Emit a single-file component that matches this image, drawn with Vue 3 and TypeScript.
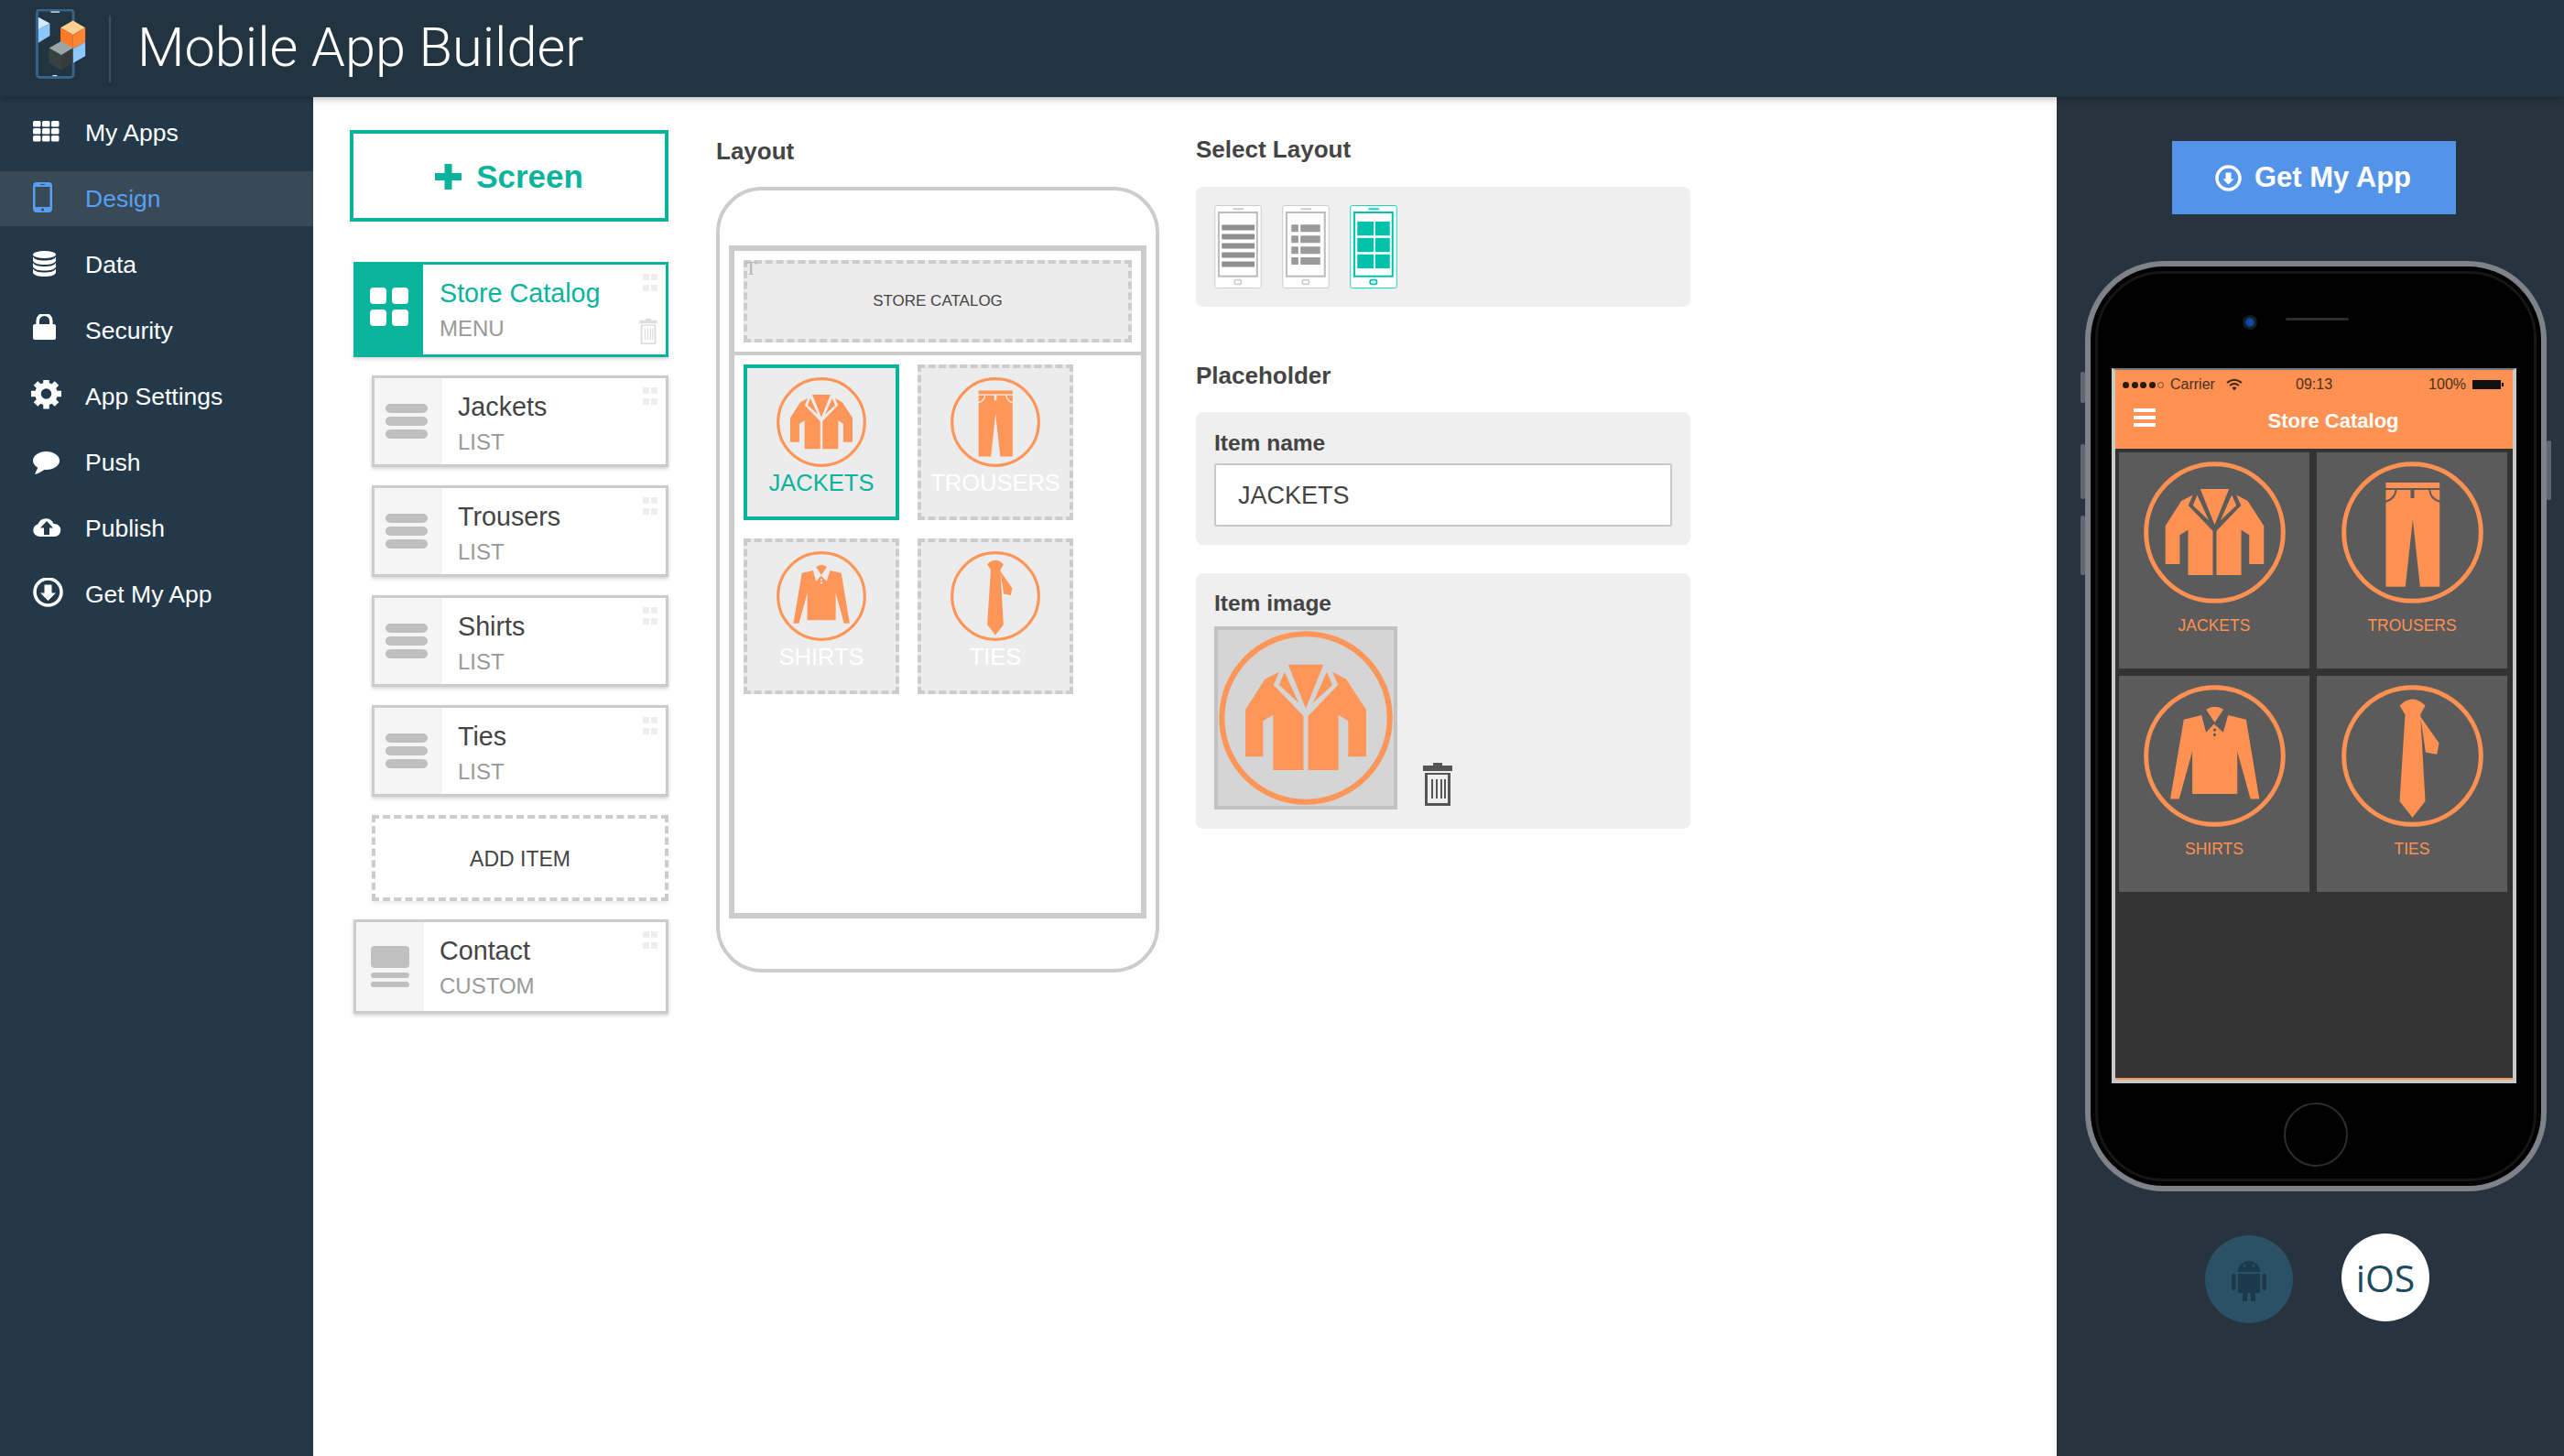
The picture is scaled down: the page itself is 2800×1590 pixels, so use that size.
<script setup lang="ts">
interface NavItem { label: string; icon: string; active?: boolean }
const navItems: NavItem[] = [
  { label: 'My Apps', icon: 'apps' },
  { label: 'Design', icon: 'device', active: true },
  { label: 'Data', icon: 'data' },
  { label: 'Security', icon: 'lock' },
  { label: 'App Settings', icon: 'gear' },
  { label: 'Push', icon: 'chat' },
  { label: 'Publish', icon: 'cloud' },
  { label: 'Get My App', icon: 'download' },
]
const listItems = ['Jackets', 'Trousers', 'Shirts', 'Ties']
interface Tile { label: string; icon: string; selected?: boolean }
const tiles: Tile[] = [
  { label: 'JACKETS', icon: 'jacket', selected: true },
  { label: 'TROUSERS', icon: 'trousers' },
  { label: 'SHIRTS', icon: 'shirt' },
  { label: 'TIES', icon: 'tie' },
]
const layoutRows = [65, 95, 125, 155, 185]
const splitRows = [64, 100, 136, 172]
const gridRows = [54, 108, 162]
</script>

<template>
  <div class="app">
    <svg class="defs" aria-hidden="true">
      <defs>
        <symbol id="jacket" viewBox="0 0 464 464">
          <circle cx="232" cy="232" r="224" fill="none" stroke="currentColor" stroke-width="15" />
          <path fill="currentColor" d="M71 210L123 129 161 109 146 144 226 227V371H145V224L118 240V335H71ZM393 210L340 129 303 109 318 144 238 227V371H319V224L345 240V335H393ZM185 90H279L232 207ZM175 109L161 144 213 192ZM288 109L303 144 251 192Z" />
        </symbol>
        <symbol id="trousers" viewBox="0 0 464 464">
          <circle cx="232" cy="232" r="224" fill="none" stroke="currentColor" stroke-width="15" />
          <path fill="currentColor" d="M145 69H321V87H145ZM145 93H175Q172 120 145 127ZM321 93H291Q294 120 321 127ZM145 134Q178 126 181 93H226V120H238V93H285Q288 126 321 134V409H257L233 190 209 409H145Z" />
        </symbol>
        <symbol id="shirt" viewBox="0 0 464 464">
          <circle cx="232" cy="232" r="224" fill="none" stroke="currentColor" stroke-width="15" />
          <path fill="currentColor" fill-rule="evenodd" d="M131 113L189 99 204 155 230 127 260 155 276 99 335 113 378 373H349L306 217V356H159V217L116 373H87ZM227 147a5 5 0 1 0 10 0a5 5 0 1 0-10 0ZM227 163a5 5 0 1 0 10 0a5 5 0 1 0-10 0Z" />
          <path fill="currentColor" d="M204 80Q232 62 261 80L232 123Z" />
        </symbol>
        <symbol id="tie" viewBox="0 0 464 464">
          <circle cx="232" cy="232" r="224" fill="none" stroke="currentColor" stroke-width="15" />
          <path fill="currentColor" d="M190 67Q232 26 274 67L258 97 274 380 232 433 190 380 208 97ZM258 103L319 190 312 227 275 220Z" />
        </symbol>
        <symbol id="trash" viewBox="0 0 32 47">
          <path fill="currentColor" d="M11 0H21V3H32V9H0V3H11ZM2 11H30V47H2ZM5 13V44H27V13ZM9 18H11V39H9ZM14 18H16V39H14ZM19 18H21V39H19ZM23 18H25V39H23Z" fill-rule="evenodd" />
        </symbol>
        <symbol id="handle" viewBox="0 0 16 19">
          <path fill="currentColor" d="M0 0H7V7H0ZM9 0H16V7H9ZM0 12H7V19H0ZM9 12H16V19H9Z" />
        </symbol>
        <symbol id="apps" viewBox="0 0 36 36">
          <g fill="currentColor">
            <rect x="2" y="5" width="8.5" height="6.5" rx="1.5" /><rect x="12" y="5" width="8.5" height="6.5" rx="1.5" /><rect x="22" y="5" width="8.5" height="6.5" rx="1.5" />
            <rect x="2" y="13" width="8.5" height="6.5" rx="1.5" /><rect x="12" y="13" width="8.5" height="6.5" rx="1.5" /><rect x="22" y="13" width="8.5" height="6.5" rx="1.5" />
            <rect x="2" y="21" width="8.5" height="6.5" rx="1.5" /><rect x="12" y="21" width="8.5" height="6.5" rx="1.5" /><rect x="22" y="21" width="8.5" height="6.5" rx="1.5" />
          </g>
        </symbol>
        <symbol id="device" viewBox="0 0 36 36">
          <path fill="currentColor" fill-rule="evenodd" d="M6 0H19A4 4 0 0 1 23 4V29A4 4 0 0 1 19 33H6A4 4 0 0 1 2 29V4A4 4 0 0 1 6 0ZM4.5 5V27H20.5V5ZM10 2V3H15V2ZM11 30a1.5 1.5 0 1 0 3 0a1.5 1.5 0 1 0-3 0Z" />
        </symbol>
        <symbol id="data" viewBox="0 0 36 36">
          <g fill="currentColor">
            <ellipse cx="14.5" cy="7" rx="12.5" ry="4" />
            <path d="M2 9.5C4 12.5 8 13.5 14.5 13.5S25 12.5 27 9.5V14C25 17 21 18 14.5 18S4 17 2 14Z" />
            <path d="M2 16C4 19 8 20 14.5 20S25 19 27 16V20.5C25 23.5 21 24.5 14.5 24.5S4 23.5 2 20.5Z" />
            <path d="M2 22.5C4 25.5 8 26.5 14.5 26.5S25 25.5 27 22.5V27C25 30 21 31 14.5 31S4 30 2 27Z" />
          </g>
        </symbol>
        <symbol id="lock" viewBox="0 0 36 36">
          <rect x="2" y="11" width="25" height="17" rx="2" fill="currentColor" />
          <path d="M7.2 12V7.500a7.3 7.3 0 0 1 14.600 0V12" fill="none" stroke="currentColor" stroke-width="3.6" />
        </symbol>
        <symbol id="gear" viewBox="0 0 36 36">
          <g stroke="currentColor" stroke-width="6.5">
            <path d="M16.5 -1.500V5" /><path d="M16.5 25V31.500" /><path d="M0 15H6.500" /><path d="M26.500 15H33" />
            <path d="M5 3.500L9.500 8" /><path d="M28 3.500L23.500 8" /><path d="M5 26.500L9.500 22" /><path d="M28 26.500L23.500 22" />
          </g>
          <circle cx="16.5" cy="15" r="9" fill="none" stroke="currentColor" stroke-width="6.5" />
        </symbol>
        <symbol id="chat" viewBox="0 0 36 36">
          <ellipse cx="16.5" cy="16" rx="14.5" ry="10" fill="currentColor" />
          <path d="M8 22L4 31Q11 29 15 25Z" fill="currentColor" />
        </symbol>
        <symbol id="cloud" viewBox="0 0 36 36">
          <path fill="currentColor" fill-rule="evenodd" d="M9 27A7 7 0 0 1 7.600 13.200 9 9 0 0 1 24.500 13 7 7 0 0 1 26 27ZM17 10L10 17.500H14V25H20V17.500H24Z" />
        </symbol>
        <symbol id="download" viewBox="0 0 36 36">
          <circle cx="18.5" cy="15.5" r="14.5" fill="none" stroke="currentColor" stroke-width="3.6" />
          <path fill="currentColor" d="M18.5 25L27 16.500H22.500V7.500H14.500V16.500H10Z" />
        </symbol>
      </defs>
    </svg>

    <header class="topbar">
      <svg class="logo" viewBox="0 0 60 90" aria-hidden="true">
        <rect x="1.500" y="1" width="41" height="76" rx="3" fill="#22343f" stroke="#36648f" stroke-width="3" />
        <rect x="17" y="2.500" width="10" height="1.400" fill="#dfe8ee" />
        <rect x="19" y="74.500" width="5" height="1.200" fill="#dfe8ee" />
        <path fill="#d3eaff" d="M3 9L16 16 3 23Z" />
        <path fill="#8cc8ff" d="M3 23L16 16V30L3 38Z" />
        <path fill="#ffd08f" d="M28 21L42 13 56 21 42 29Z" />
        <path fill="#ff7a28" d="M28 21L42 29V45L28 37Z" />
        <path fill="#ff8434" d="M42 29L56 21V37L42 45Z" />
        <path fill="#8cc8ff" d="M42 45L56 37V53L42 61Z" />
        <path fill="#9aa5a8" d="M15 44L29 36 42 44 29 52Z" />
        <path fill="#3a4142" d="M15 44L29 52V69L15 61Z" />
        <path fill="#343b3c" d="M29 52L42 44V61L29 69Z" />
      </svg>
      <span class="topbar-divider"></span>
      <h1 class="title">Mobile App Builder</h1>
    </header>

    <div class="body">
      <nav class="sidebar">
        <a v-for="item in navItems" :key="item.label" class="nav-item" :class="{ active: item.active }">
          <svg class="nav-icon" aria-hidden="true"><use :href="'#' + item.icon" /></svg>
          <span>{{ item.label }}</span>
        </a>
      </nav>

      <main class="workspace">
        <section class="col-screens">
          <button class="add-screen">
            <svg class="plus" viewBox="0 0 29 28" aria-hidden="true"><path fill="currentColor" d="M10.500 0H18.500V10H29V18H18.500V28H10.500V18H0V10H10.500Z" /></svg>
            <span>Screen</span>
          </button>

          <div class="card card-menu">
            <div class="card-icon menu-icon"><i></i><i></i><i></i><i></i></div>
            <div class="card-text">
              <div class="card-title">Store Catalog</div>
              <div class="card-type">MENU</div>
            </div>
            <svg class="handle" aria-hidden="true"><use href="#handle" /></svg>
            <svg class="card-trash" aria-hidden="true"><use href="#trash" /></svg>
          </div>

          <div v-for="name in listItems" :key="name" class="card card-item">
            <div class="card-icon list-icon"><i></i><i></i><i></i></div>
            <div class="card-text">
              <div class="card-title">{{ name }}</div>
              <div class="card-type">LIST</div>
            </div>
            <svg class="handle" aria-hidden="true"><use href="#handle" /></svg>
          </div>

          <div class="add-item">ADD ITEM</div>

          <div class="card card-custom">
            <div class="card-icon custom-icon"><b></b><i></i><i></i></div>
            <div class="card-text">
              <div class="card-title">Contact</div>
              <div class="card-type">CUSTOM</div>
            </div>
            <svg class="handle" aria-hidden="true"><use href="#handle" /></svg>
          </div>
        </section>

        <section class="col-layout">
          <h2 class="heading">Layout</h2>
          <div class="wire-phone">
            <div class="wire-screen">
              <div class="wire-head">
                <div class="wire-title">
                  <span class="wire-t">T</span>
                  STORE CATALOG
                </div>
              </div>
              <div class="wire-grid">
                <div v-for="tile in tiles" :key="tile.label" class="wire-tile" :class="{ selected: tile.selected }">
                  <svg class="wire-glyph" aria-hidden="true"><use :href="'#' + tile.icon" /></svg>
                  <span>{{ tile.label }}</span>
                </div>
              </div>
            </div>
          </div>
        </section>

        <section class="col-options">
          <h2 class="heading">Select Layout</h2>
          <div class="panel layouts">
            <svg class="layout-thumb" viewBox="0 0 155 274" aria-hidden="true">
              <rect x="1.500" y="1.500" width="152" height="271" rx="6" fill="#fff" stroke="#ccc" stroke-width="3" />
              <rect x="60" y="10" width="36" height="6" rx="3" fill="#ccc" />
              <rect x="14" y="24" width="126" height="210" fill="#fff" stroke="#bbb" stroke-width="6" />
              <rect x="66" y="246" width="22" height="14" rx="5" fill="none" stroke="#ccc" stroke-width="5" />
              <rect v-for="y in layoutRows" :key="y" x="24" :y="y" width="108" height="18" rx="2" fill="#8f8f8f" />
            </svg>
            <svg class="layout-thumb" viewBox="0 0 155 274" aria-hidden="true">
              <rect x="1.500" y="1.500" width="152" height="271" rx="6" fill="#fff" stroke="#ccc" stroke-width="3" />
              <rect x="60" y="10" width="36" height="6" rx="3" fill="#ccc" />
              <rect x="14" y="24" width="126" height="210" fill="#fff" stroke="#bbb" stroke-width="6" />
              <rect x="66" y="246" width="22" height="14" rx="5" fill="none" stroke="#ccc" stroke-width="5" />
              <g v-for="y in splitRows" :key="y" fill="#9a9a9a">
                <rect x="30" :y="y" width="23" height="24" rx="2" />
                <rect x="60" :y="y" width="65" height="24" rx="2" />
              </g>
            </svg>
            <svg class="layout-thumb" viewBox="0 0 155 274" aria-hidden="true">
              <rect x="1.500" y="1.500" width="152" height="271" rx="6" fill="#fff" stroke="#19d3bd" stroke-width="3" />
              <rect x="60" y="10" width="36" height="6" rx="3" fill="#19d3bd" />
              <rect x="14" y="24" width="126" height="210" fill="#fff" stroke="#00c2ab" stroke-width="6" />
              <rect x="66" y="246" width="22" height="14" rx="5" fill="none" stroke="#00c2ab" stroke-width="5" />
              <g v-for="y in gridRows" :key="y" fill="#00c2ab">
                <rect x="24" :y="y" width="54" height="46" />
                <rect x="83" :y="y" width="48" height="46" />
              </g>
            </svg>
          </div>

          <h2 class="heading heading-gap">Placeholder</h2>
          <div class="panel name-panel">
            <label class="field-label">Item name</label>
            <div class="field-input">JACKETS</div>
          </div>
          <div class="panel image-panel">
            <label class="field-label">Item image</label>
            <div class="image-row">
              <div class="image-box">
                <svg class="image-glyph" aria-hidden="true"><use href="#jacket" /></svg>
              </div>
              <svg class="image-trash" aria-hidden="true"><use href="#trash" /></svg>
            </div>
          </div>
        </section>
      </main>

      <aside class="preview">
        <button class="get-app">
          <svg class="get-icon" viewBox="0 0 29 29" aria-hidden="true">
            <circle cx="14.500" cy="14.500" r="12.500" fill="none" stroke="currentColor" stroke-width="3.500" />
            <path fill="currentColor" d="M14.500 21.500L20.500 15.500H17.500V8.500H11.500V15.500H8.500Z" />
          </svg>
          <span>Get My App</span>
        </button>

        <div class="phone">
          <i class="side side-a"></i><i class="side side-b"></i><i class="side side-c"></i><i class="side side-d"></i>
          <i class="camera"></i><i class="speaker"></i><i class="home"></i>
          <div class="screen">
            <div class="app-head">
              <div class="status">
                <span class="signal"><i></i><i></i><i></i><i></i><i class="off"></i></span>
                <span class="carrier">Carrier</span>
                <svg class="wifi" viewBox="0 0 18 14" aria-hidden="true">
                  <path d="M1 5Q9-1.500 17 5M4 8Q9 4 14 8" fill="none" stroke="currentColor" stroke-width="2" />
                  <path d="M6.500 10.500Q9 8.500 11.500 10.500L9 13.500Z" fill="currentColor" />
                </svg>
                <span class="clock">09:13</span>
                <span class="pct">100%</span>
                <span class="battery"></span>
              </div>
              <div class="app-nav">
                <span class="burger"><i></i><i></i><i></i></span>
                <span class="app-title">Store Catalog</span>
              </div>
            </div>
            <div class="app-grid">
              <div v-for="tile in tiles" :key="tile.label" class="app-tile">
                <svg class="app-glyph" aria-hidden="true"><use :href="'#' + tile.icon" /></svg>
                <span>{{ tile.label }}</span>
              </div>
            </div>
          </div>
        </div>

        <div class="platforms">
          <div class="platform android">
            <svg viewBox="0 0 38 47" class="android-icon" aria-hidden="true">
              <path fill="currentColor" fill-rule="evenodd" d="M7 15A12 12 0 0 1 31 15ZM13 8.500a1.300 1.300 0 1 0 2.600 0a1.300 1.300 0 1 0-2.600 0ZM22.500 8.500a1.300 1.300 0 1 0 2.600 0a1.300 1.300 0 1 0-2.600 0Z" />
              <path fill="currentColor" d="M7 17H31V36A2 2 0 0 1 29 38H26V47H21V38H17V47H12V38H9A2 2 0 0 1 7 36Z" />
              <rect x="0" y="17" width="4.500" height="18" rx="2.200" fill="currentColor" />
              <rect x="33.500" y="17" width="4.500" height="18" rx="2.200" fill="currentColor" />
            </svg>
          </div>
          <div class="platform ios">iOS</div>
        </div>
      </aside>
    </div>
  </div>
</template>

<style scoped>
.app {
  width: 100%;
  height: 100vh;
  overflow: hidden;
  display: flex;
  flex-direction: column;
  background: #fff;
  font-family: "Liberation Sans", Arial, sans-serif;
  color: #444;
}
.defs { width: 0; height: 0; position: absolute; }

.topbar {
  flex: none;
  height: 106px;
  display: flex;
  align-items: center;
  background: #22343f;
  box-shadow: 0 2px 7px rgba(0, 0, 0, .28);
  position: relative;
  z-index: 2;
}
.logo { width: 58px; height: 87px; margin: 0 0 0 39px; flex: none; }
.topbar-divider { width: 2px; height: 73px; background: #3e4f5b; margin-left: 22px; }
.title {
  margin: 0 0 0 29px;
  font: 300 59.500px/1 Roboto, "Liberation Sans", sans-serif;
  color: #fff;
}

.body { flex: 1; display: flex; min-height: 0; }

.sidebar {
  flex: none;
  width: 342px;
  background: #23394a;
  padding-top: 9px;
  display: flex;
  flex-direction: column;
  gap: 12px;
}
.nav-item {
  height: 60px;
  padding-left: 34px;
  display: flex;
  align-items: center;
  font-size: 26.500px;
  color: #fff;
}
.nav-item.active { background: #394955; color: #55a0f5; }
.nav-icon { width: 36px; height: 36px; margin-right: 23px; overflow: visible; flex: none; }

.workspace {
  flex: 1;
  display: flex;
  padding-left: 40px;
  background: #fff;
}
.col-screens { width: 348px; flex: none; padding-top: 36px; display: flex; flex-direction: column; }
.add-screen {
  height: 100px;
  flex: none;
  border: 4px solid #0ab39c;
  background: #fff;
  color: #0ab39c;
  display: flex;
  align-items: center;
  justify-content: center;
  gap: 16px;
  font: 700 35px "Liberation Sans", Arial, sans-serif;
  margin-bottom: 44px;
  padding: 2px 0 0;
}
.plus { width: 29px; height: 28px; }

.card {
  position: relative;
  flex: none;
  box-sizing: border-box;
  display: flex;
  background: #fff;
  border: 3px solid #ccc;
  box-shadow: 0 2px 4px rgba(0, 0, 0, .18);
}
.card-menu { height: 104px; margin-left: 4px; border-color: #0ab39c; margin-bottom: 20px; }
.card-item { height: 100px; margin-left: 24px; margin-bottom: 20px; }
.card-custom { height: 103px; margin-left: 4px; }
.card-icon { flex: none; background: #f5f5f5; width: 74px; }
.menu-icon {
  background: #0ab39c;
  margin: -3px 0 -3px -3px;
  padding: 28px 0 0 18px;
  display: grid;
  grid-template-columns: 18px 18px;
  grid-auto-rows: 18px;
  gap: 6px;
  box-sizing: content-box;
  width: 58px;
  height: 76px;
  align-content: start;
}
.menu-icon i { background: #fff; border-radius: 4px; }
.list-icon { display: flex; flex-direction: column; gap: 4px; align-items: center; justify-content: center; box-sizing: border-box; padding-right: 5px; }
.list-icon i { width: 46px; height: 10px; border-radius: 5px; background: #c0c0c0; }
.custom-icon { display: flex; flex-direction: column; gap: 4px; align-items: center; justify-content: center; }
.custom-icon b { width: 42px; height: 24px; border-radius: 4px; background: #c0c0c0; margin-bottom: 1px; }
.custom-icon i { width: 42px; height: 6px; border-radius: 3px; background: #c0c0c0; }
.card-text { padding: 0 0 0 17px; }
.card-title { font-size: 28.700px; line-height: 34px; margin-top: 14px; color: #444; }
.card-type { font-size: 24px; line-height: 34px; margin-top: 5px; color: #999; }
.card-menu .card-title { color: #0ab39c; }
.card-menu .card-text { padding-left: 18px; }
.handle { position: absolute; right: 9px; top: 10px; width: 16px; height: 19px; color: #eee; }
.card-trash { position: absolute; right: 8px; bottom: 11px; width: 22px; height: 28px; color: #ddd; }

.add-item {
  height: 94px;
  flex: none;
  margin-left: 24px;
  margin-bottom: 20px;
  box-sizing: border-box;
  border: 4px dashed #ccc;
  padding-top: 2px;
  display: flex;
  align-items: center;
  justify-content: center;
  font-size: 23px;
  color: #444;
  box-shadow: 0 2px 4px rgba(0, 0, 0, .08);
}

.heading { margin: 0; font-size: 26px; line-height: 30px; font-weight: 700; color: #444; }
.col-layout { width: 484px; flex: none; margin-left: 52px; padding-top: 44px; }
.wire-phone {
  margin-top: 24px;
  height: 858px;
  box-sizing: border-box;
  border: 4px solid #ccc;
  border-radius: 50px;
  padding: 60px 10px 0;
}
.wire-screen { height: 735px; box-sizing: border-box; border: 6px solid #ccc; }
.wire-head { height: 114px; box-sizing: border-box; padding: 9.500px 10px 0; border-bottom: 4px solid #ccc; }
.wire-title {
  position: relative;
  height: 90px;
  box-sizing: border-box;
  border: 4px dashed #ccc;
  background: #ececec;
  display: flex;
  align-items: center;
  justify-content: center;
  font-size: 17px;
  color: #444;
}
.wire-t { position: absolute; left: -2px; top: -6px; font: 20px "Liberation Serif", serif; color: #b5b5b5; }
.wire-grid {
  display: grid;
  grid-template-columns: 170px 170px;
  grid-auto-rows: 170px;
  column-gap: 20px;
  row-gap: 20px;
  padding: 10px 10px 0;
}
.wire-tile {
  box-sizing: border-box;
  border: 4px dashed #ccc;
  background: #ececec;
  display: flex;
  flex-direction: column;
  align-items: center;
  padding-top: 10px;
  font-size: 25.500px;
  line-height: 30px;
  color: #fff;
}
.wire-tile.selected { border: 4px solid #0ab39c; color: #0ab39c; }
.wire-glyph { width: 98px; height: 98px; color: #fe9659; margin-bottom: 2px; flex: none; }

.col-options { width: 540px; flex: none; margin-left: 40px; padding-top: 42px; }
.panel { background: #efefef; border-radius: 8px; box-sizing: border-box; }
.layouts { margin-top: 26px; height: 131px; display: flex; gap: 22px; padding: 20px; }
.layout-thumb { width: 52px; height: 91px; }
.heading-gap { margin-top: 60px; }
.name-panel { margin-top: 25px; height: 145px; padding: 19px 20px 0; }
.field-label { display: block; font-size: 24.500px; line-height: 30px; font-weight: 700; color: #444; }
.field-input {
  margin-top: 7px;
  height: 69px;
  box-sizing: border-box;
  border: 2px solid #c8c8c8;
  border-radius: 3px;
  background: #fff;
  padding: 2px 0 0 24px;
  display: flex;
  align-items: center;
  font-size: 27px;
  color: #444;
}
.image-panel { margin-top: 31px; height: 279px; padding: 18px 20px 0; }
.image-row { display: flex; align-items: flex-end; margin-top: 10px; }
.image-box {
  width: 200px;
  height: 200px;
  box-sizing: border-box;
  border: 4px solid #c2c2c2;
  background: #d5d5d5;
  display: flex;
  align-items: center;
  justify-content: center;
}
.image-glyph { width: 190px; height: 190px; color: #fe9659; flex: none; }
.image-trash { width: 32px; height: 47px; margin: 0 0 4px 28px; color: #555; }

.preview {
  flex: none;
  width: 554px;
  background: #27333f;
  padding-top: 48px;
  display: flex;
  flex-direction: column;
  align-items: flex-start;
}
.get-app {
  margin-left: 126px;
  width: 310px;
  height: 80px;
  border: 0;
  background: #5394e8;
  color: #fff;
  display: flex;
  align-items: center;
  justify-content: center;
  gap: 14px;
  font: 700 31px "Liberation Sans", Arial, sans-serif;
  padding: 0;
}
.get-icon { width: 29px; height: 29px; margin-left: -2px; }

.phone {
  position: relative;
  margin: 51px 0 0 31px;
  width: 504px;
  height: 1016px;
  box-sizing: border-box;
  border: 6px solid #7f8389;
  border-radius: 86px;
  background: #000;
  padding: 111px 0 0 23px;
}
.phone::before {
  content: "";
  position: absolute;
  inset: 5px;
  border: 3px solid #161616;
  border-radius: 74px;
  pointer-events: none;
}
.side { position: absolute; width: 5px; background: #5f6771; border-radius: 2px; }
.side-a { left: -11px; top: 115px; height: 34px; }
.side-b { left: -11px; top: 194px; height: 60px; }
.side-c { left: -11px; top: 272px; height: 65px; }
.side-d { right: -11px; top: 190px; height: 65px; }
.camera {
  position: absolute;
  left: 166px;
  top: 53px;
  width: 16px;
  height: 16px;
  border-radius: 50%;
  background: radial-gradient(circle, #0d4aa0 0 30%, #12161c 55%, #2b2f35 100%);
}
.speaker { position: absolute; left: 213px; top: 56px; width: 69px; height: 3px; border-radius: 2px; background: #2c2c2c; }
.home {
  position: absolute;
  left: 211px;
  top: 913px;
  width: 66px;
  height: 66px;
  border: 2px solid #2a2d31;
  border-radius: 50%;
}

.screen {
  position: relative;
  width: 442px;
  height: 781px;
  box-sizing: border-box;
  border: 4px solid #c9c9c9;
  border-top: 2px solid #777;
  background: #333;
}
.screen::after { content: ""; position: absolute; left: 0; right: 0; bottom: 0; height: 2px; background: #ff9152; }
.app-head { height: 86px; background: #ff9152; }
.status {
  height: 32px;
  display: flex;
  align-items: center;
  position: relative;
  font-size: 16px;
  color: #4a3020;
}
.signal { display: flex; gap: 2.500px; margin-left: 8px; width: 52px; flex: none; }
.signal i { width: 7px; height: 7px; border-radius: 50%; background: #2a1a10; }
.signal i.off { background: none; border: 1px solid #6a4a30; box-sizing: border-box; }
.carrier { width: 61px; flex: none; }
.wifi { width: 18px; height: 14px; color: #3a2415; }
.clock { margin-left: 58px; }
.pct { margin-left: auto; margin-right: 7px; }
.battery { width: 31px; height: 10px; background: #111; margin-right: 13px; position: relative; }
.battery::after { content: ""; position: absolute; right: -3px; top: 3px; width: 2px; height: 4px; background: #111; }
.app-nav { height: 54px; position: relative; display: flex; align-items: center; justify-content: center; padding-left: 42px; padding-bottom: 6px; box-sizing: border-box; }
.burger { position: absolute; left: 20px; top: 10px; width: 24px; display: flex; flex-direction: column; gap: 4px; }
.burger i { height: 4px; background: #fff; }
.app-title { font-size: 22px; font-weight: 700; color: #fff; }
.app-grid {
  display: grid;
  grid-template-columns: 208px 208px;
  grid-auto-rows: 236px;
  gap: 8px;
  padding: 4px 6px 0 4px;
}
.app-tile {
  background: #5b5b5b;
  color: #ff9152;
  display: flex;
  flex-direction: column;
  align-items: center;
  padding-top: 10px;
  font-size: 17.500px;
  line-height: 24px;
}
.app-glyph { width: 155px; height: 155px; margin-bottom: 12px; flex: none; }

.platforms { margin: 46px 0 0 162px; display: flex; gap: 53px; align-items: flex-start; }
.platform { width: 96px; height: 96px; border-radius: 50%; display: flex; align-items: center; justify-content: center; }
.android { background: #2b5166; color: #1a3a4c; margin-top: 2px; }
.android-icon { width: 38px; height: 47px; }
.ios { background: #fff; color: #1d4a5f; font: 400 41px "Open Sans", sans-serif; }
</style>
